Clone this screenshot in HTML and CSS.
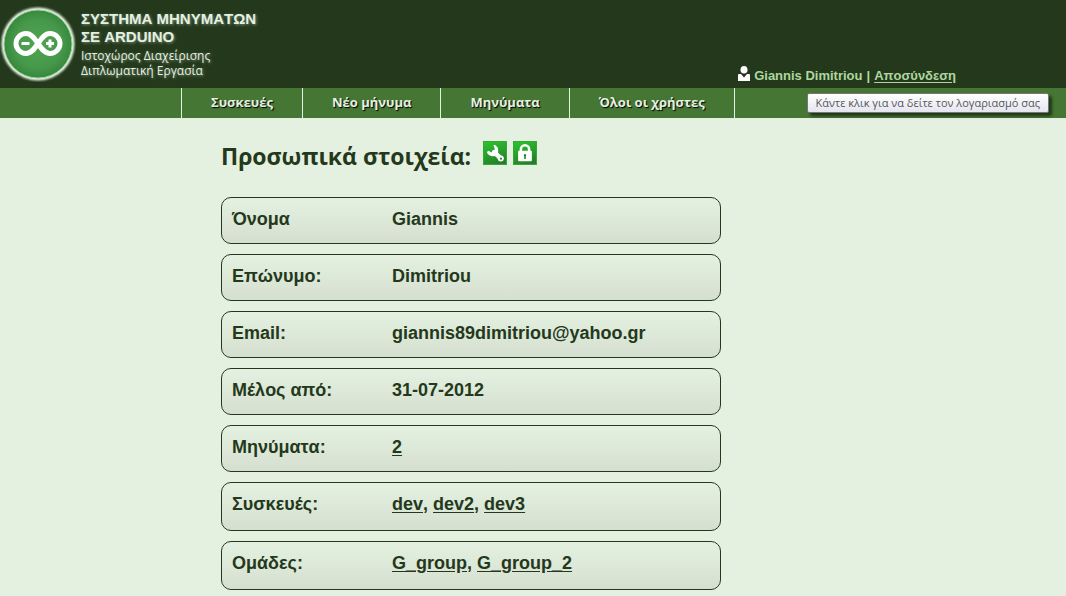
FILE: index.html
```html
<!DOCTYPE html>
<html lang="el">
<head>
<meta charset="utf-8">
<meta name="viewport" content="width=device-width, initial-scale=1">
<title>Σύστημα μηνυμάτων σε Arduino</title>
<link rel="stylesheet" href="styles.css">
</head>
<body>
<header class="header">
  <svg class="logo" viewBox="0 0 76 76" aria-hidden="true">
    <defs>
      <radialGradient id="disc"><stop offset="0" stop-color="#4fa552"/><stop offset=".7" stop-color="#46994a"/><stop offset="1" stop-color="#38873e"/></radialGradient>
      <filter id="halo" x="-20%" y="-20%" width="140%" height="140%"><feGaussianBlur stdDeviation="1"/></filter>
    </defs>
    <circle cx="38" cy="38" r="36.500" fill="#f2faf0" filter="url(#halo)"/>
    <circle cx="38" cy="38" r="34" fill="url(#disc)" stroke="#8ed68d" stroke-width="1"/>
    <path d="M38 37.500C34 31.500 31 27.500 26 27.500a10 10 0 0 0 0 20c5 0 8-4 12-10s7-10 12-10a10 10 0 0 1 0 20c-5 0-8-4-12-10Z" fill="none" stroke="#fff" stroke-width="5"/>
    <path d="M21.500 37.500h8M46 37.500h8M50 33.500v8" stroke="#fff" stroke-width="3"/>
  </svg>
  <div class="brand">
    <h1 class="brand-title">ΣΥΣΤΗΜΑ ΜΗΝΥΜΑΤΩΝ<br>ΣΕ ARDUINO</h1>
    <p class="brand-sub">Ιστοχώρος Διαχείρισης<br>Διπλωματική Εργασία</p>
  </div>
  <div class="account">
    <svg class="account-icon" viewBox="0 0 12 15" aria-hidden="true"><ellipse cx="6" cy="3.800" rx="3.500" ry="3.800" fill="#fff"/><path d="M0 15V9q0-1 1-1h2l3 3.500L9 8h2q1 0 1 1v6Z" fill="#fff"/></svg>
    <a class="account-name" href="#account">Giannis Dimitriou</a> <span>|</span> <a class="logout" href="#logout">Αποσύνδεση</a>
    <div class="tooltip" role="tooltip">Κάντε κλικ για να δείτε τον λογαριασμό σας</div>
  </div>
</header>
<nav class="nav">
  <a class="nav-link" href="#devices">Συσκευές</a>
  <a class="nav-link" href="#new">Νέο μήνυμα</a>
  <a class="nav-link" href="#messages">Μηνύματα</a>
  <a class="nav-link" href="#users">Όλοι οι χρήστες</a>
</nav>
<main class="main">
  <div class="heading">
    <h2 class="heading-title">Προσωπικά στοιχεία:</h2>
    <button class="tool" type="button" aria-label="Επεξεργασία στοιχείων">
      <svg viewBox="0 0 24 24" aria-hidden="true"><path d="M11 11 18.500 18" stroke="#fff" stroke-width="5" stroke-linecap="round"/><path d="M10.500 3.500q1-.8 2 0 4 3 2.800 7.500-.5 3-3.800 4.300-5 1-8-3.300-.6-1 .4-2 1-.8 2 0l2.500 1.500 3.400-2.500-.6-3.500q-1.300-1.200-.7-2Z" fill="#fff"/><circle cx="18.300" cy="18" r="3.300" fill="#fff"/><circle cx="18.500" cy="18.200" r="1.200" fill="#258a28"/></svg>
    </button>
    <button class="tool" type="button" aria-label="Αλλαγή κωδικού">
      <svg viewBox="0 0 24 24" aria-hidden="true"><path d="M7.500 10V8a4.500 4.500 0 0 1 9 0v2" fill="none" stroke="#fff" stroke-width="2.800"/><rect x="4.500" y="9.500" width="15" height="11.500" rx="1" fill="#fff"/><path d="M12 13a1.500 1.500 0 0 1 .9 2.600V18.500h-1.800v-2.900A1.500 1.500 0 0 1 12 13Z" fill="#258a28"/></svg>
    </button>
  </div>
  <dl class="details">
    <div class="row"><dt>Όνομα</dt><dd>Giannis</dd></div>
    <div class="row"><dt>Επώνυμο:</dt><dd>Dimitriou</dd></div>
    <div class="row"><dt>Email:</dt><dd>giannis89dimitriou@yahoo.gr</dd></div>
    <div class="row"><dt>Μέλος από:</dt><dd>31-07-2012</dd></div>
    <div class="row"><dt>Μηνύματα:</dt><dd><a href="#messages">2</a></dd></div>
    <div class="row row-list"><dt>Συσκευές:</dt><dd><a href="#dev">dev</a>, <a href="#dev2">dev2</a>, <a href="#dev3">dev3</a></dd></div>
    <div class="row row-list"><dt>Ομάδες:</dt><dd><a href="#g1">G_group</a>, <a href="#g2">G_group_2</a></dd></div>
  </dl>
</main>
</body>
</html>
```
FILE: styles.css
```css
* { box-sizing: border-box; }
body {
  margin: 0;
  background: #e4f1e0;
  color: #24391c;
  font-family: "Liberation Sans", Arial, sans-serif;
  font-kerning: none;
}
h1, h2, p, dl, dd { margin: 0; }
a { color: inherit; }
.header {
  display: flex;
  align-items: flex-start;
  gap: 5px;
  height: 88px;
  padding-top: 6px;
  background: #24391c;
  color: #e4f1e0;
}
.logo { width: 76px; height: 76px; flex: none; }
.brand { padding-top: 4px; text-shadow: 1px 1px 3px #7c8a76; }
.brand-title { font-size: 15px; line-height: 18px; }
.brand-sub { padding-top: 2px; font-family: "Open Sans", sans-serif; font-size: 12px; font-weight: 500; line-height: 15px; }
.account {
  position: relative;
  display: flex;
  align-items: center;
  gap: 4px;
  margin: 60px 110px 0 auto;
  font-size: 13px;
  font-weight: bold;
  line-height: 20px;
  color: #add79f;
}
.account-icon { width: 12px; height: 15px; margin-bottom: 5px; }
.account-name { text-decoration: none; }
.logout { text-underline-offset: 2px; }
.tooltip {
  position: absolute;
  top: 27px;
  right: -93px;
  padding: 0 8px;
  border: 1px solid #767676;
  border-radius: 2px;
  background: linear-gradient(#fff, #e4e5f0);
  box-shadow: 3px 3px 3px #0008;
  color: #575757;
  font-family: "Open Sans", sans-serif;
  font-size: 11px;
  font-weight: normal;
  line-height: 18px;
  white-space: nowrap;
}
.nav {
  display: flex;
  height: 30px;
  padding-left: 181px;
  background: #457633;
}
.nav-link {
  padding: 0 29px;
  border-left: 1px solid #e4f1e0;
  color: #e4f1e0;
  font-family: "Open Sans", sans-serif;
  font-size: 13px;
  font-weight: bold;
  line-height: 28px;
  text-decoration: none;
  text-shadow: 1px 1px 1px #000;
}
.nav-link:last-child { border-right: 1px solid #e4f1e0; }
.main { max-width: 721px; padding: 20px 0 6px 221px; }
.heading { display: flex; align-items: flex-start; gap: 6px; height: 59px; }
.heading-title { margin-right: 6px; font-family: "Open Sans", sans-serif; font-size: 23px; line-height: 36px; white-space: nowrap; }
.tool {
  width: 24px;
  height: 24px;
  margin-top: 3px;
  padding: 0;
  border: 1px solid #35a637;
  background: linear-gradient(160deg, #2cc42c, #24772a);
}
.tool svg { display: block; width: 22px; height: 22px; }
.details { display: grid; gap: 10px; font-size: 18px; font-weight: bold; line-height: 21px; }
.row {
  display: grid;
  grid-template-columns: 160px 1fr;
  padding: 11px 10px 13px;
  border: 1px solid #24391c;
  border-radius: 10px;
  background: linear-gradient(#e4f1e0, #d5dfd0);
}
.row-list { padding-bottom: 15px; }
.row a { text-underline-offset: 2px; }
```
